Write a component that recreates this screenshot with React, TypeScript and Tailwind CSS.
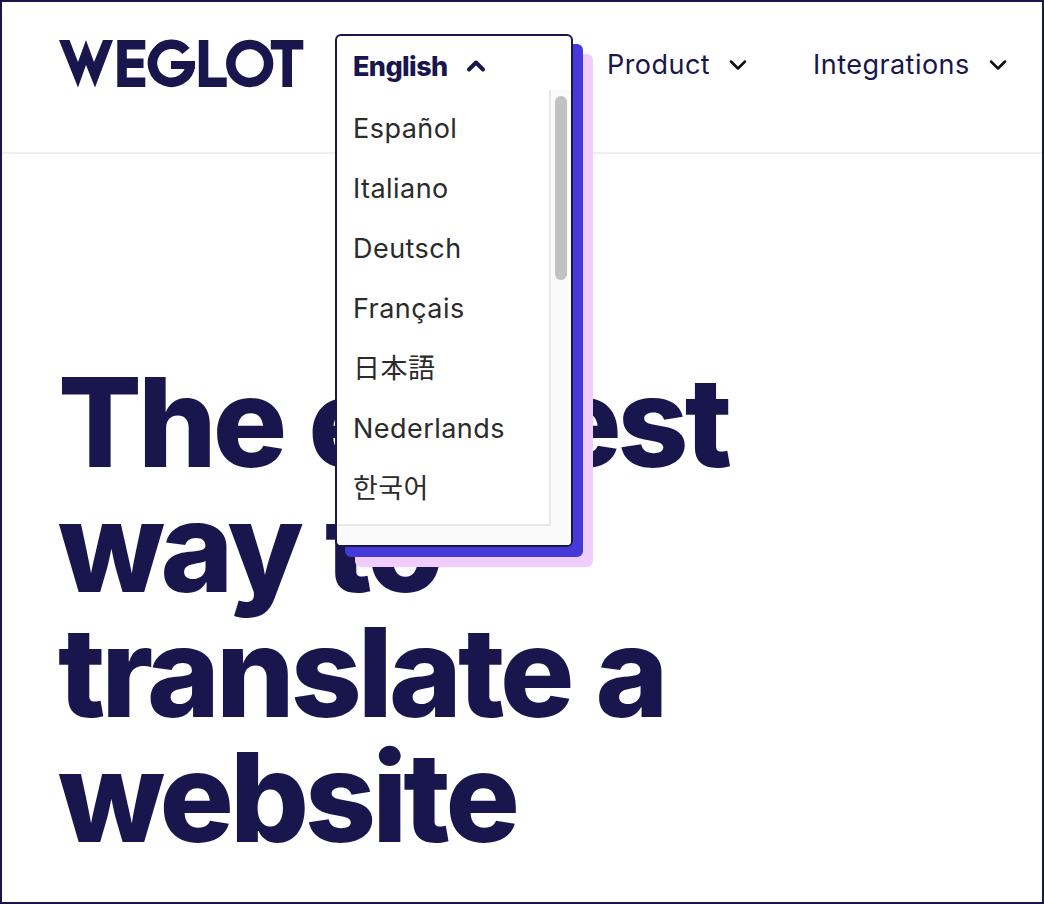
import { ChevronDown, ChevronUp } from 'lucide-react';

const languages = ['Español', 'Italiano', 'Deutsch', 'Français', '日本語', 'Nederlands', '한국어'];

const navItems = [
  { label: 'Product', className: 'ml-[34px]', gap: 'ml-[14px]' },
  { label: 'Integrations', className: 'ml-[61px]', gap: 'ml-[14px]' },
];

function Logo() {
  return (
    <svg width="246" height="49" viewBox="58 39 246 49" fill="#18164c" aria-label="Weglot" className="shrink-0">
      <polygon points="59,40 69.5,40 78,62 86,40 94,62 103,40 113,40 95,87.5 86,65 78,87.5" />
      <polygon points="117.3,40 145.3,40 145.3,49.5 126.8,49.5 126.8,58.5 143.5,58.5 143.5,68 126.8,68 126.8,77.5 145.3,77.5 145.3,87 117.3,87" />
      <path d="M186 51 A19 19 0 1 0 190.4 65" fill="none" stroke="#18164c" strokeWidth="9.5" />
      <polygon points="171,61 195,61 195,69 171,69" />
      <polygon points="198.8,40 208.3,40 208.3,77.5 226.7,77.5 226.7,87 198.8,87" />
      <circle cx="249.7" cy="63.5" r="18.9" fill="none" stroke="#18164c" strokeWidth="9.5" />
      <polygon points="270.8,40 303.3,40 303.3,49.5 292,49.5 292,87 282.4,87 282.4,49.5 270.8,49.5" />
    </svg>
  );
}

function LanguageMenu() {
  return (
    <div className="relative w-[238px] shrink-0 self-start ml-[31px] mt-[32px]">
      <div className="absolute left-0 top-0 z-10 w-[238px] h-[513px] flex flex-col rounded-[6px] border-2 border-[#18164c] bg-white shadow-[10px_10px_0_#4539d8,20px_20px_0_#f0cdfd] overflow-hidden">
        <div className="h-[54px] shrink-0 flex items-center pl-[16px] pt-[9px] text-[#18164c] text-[27px] font-extrabold tracking-[-0.6px]">
          English
          <ChevronUp size={28} strokeWidth={3.4} className="ml-[14px] -mt-[3px]" />
        </div>
        <div className="flex-1 flex min-h-0">
          <ul className="flex-1 pt-[9px] bg-white border-r-2 border-[#e8e8e8]">
            {languages.map((lang) => (
              <li key={lang} className="h-[60px] flex items-center pl-[16px] text-[27px] tracking-[0.45px] text-[#2b2b2b]">
                {lang}
              </li>
            ))}
          </ul>
          <div className="w-[20px] shrink-0 bg-[#fafafa] pl-[4px] pt-[6px]">
            <div className="w-[12px] h-[184px] rounded-full bg-[#c1c1c1]" />
          </div>
        </div>
        <div className="h-[21px] shrink-0 flex bg-[#fafafa]">
          <div className="w-[214px] border-t-2 border-[#e8e8e8]" />
        </div>
      </div>
    </div>
  );
}

export default function App() {
  return (
    <div
      className="w-[1044px] h-[904px] border-2 border-[#18164c] bg-white overflow-hidden"
      style={{ fontFamily: 'Inter, "Noto Sans CJK KR", "Noto Sans CJK JP", sans-serif' }}
    >
      <header className="h-[152px] flex items-start pl-[56px] border-b-2 border-[#eeeeee]">
        <div className="mt-[37px]">
          <Logo />
        </div>
        <LanguageMenu />
        {navItems.map((item) => (
          <div key={item.label} className={`flex items-center h-[60px] mt-[33px] ${item.className}`}>
            <span className="text-[27px] tracking-[0.45px] text-[#18164c]">{item.label}</span>
            <ChevronDown size={28} strokeWidth={2.2} className={`${item.gap} text-[#111111]`} />
          </div>
        ))}
      </header>
      <h1 className="pl-[56px] pt-[206px] text-[124px] leading-[125px] font-extrabold text-[#18164c] tracking-[-4px] [word-spacing:2px]">
        The easiest
        <br />
        way to
        <br />
        translate a
        <br />
        website
      </h1>
    </div>
  );
}
